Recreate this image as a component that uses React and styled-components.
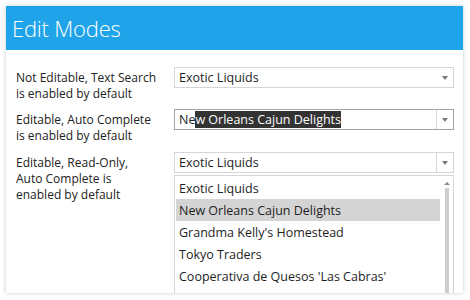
import React from "react";
import styled, { createGlobalStyle } from "styled-components";

const Global = createGlobalStyle`
  html, body { margin: 0; padding: 0; background: #ffffff; }
  body { font-family: "Open Sans", "Noto Sans", sans-serif; }
`;

const Page = styled.div`
  padding: 6px 7px 7px 6px;
`;

const Card = styled.div`
  width: 457px;
  height: 287px;
  background: #fff;
  box-shadow: 0 0 4px rgba(0, 0, 0, 0.22);
  overflow: hidden;
  display: flex;
  flex-direction: column;
`;

const Header = styled.div`
  flex-shrink: 0;
  height: 44px;
  background: #1fa3e9;
  color: #fff;
  display: flex;
  align-items: center;
  padding-left: 6px;
  font-family: "Open Sans", "Noto Sans", sans-serif;
  font-weight: 300;
  font-size: 22px;
  letter-spacing: -0.2px;
`;

const Body = styled.div`
  flex-shrink: 0;
  padding: 17px 0 0 10px;
  display: flex;
  flex-direction: column;
`;

const Row = styled.div`
  flex-shrink: 0;
  display: flex;
  align-items: flex-start;
  height: ${(p) => p.$h}px;
`;

const Label = styled.div`
  width: 158px;
  padding-top: 3px;
  font-size: 12px;
  line-height: 16px;
  color: #222;
  white-space: pre-line;
`;

const Field = styled.div`
  width: 280px;
  display: flex;
  flex-direction: column;
`;

const Select = styled.div`
  box-sizing: border-box;
  height: 21px;
  border: 1px solid ${(p) => (p.$focused ? "#a3a3a3" : "#d6d6d6")};
  display: flex;
  align-items: center;
  background: #fff;
`;

const Value = styled.div`
  flex: 1;
  padding-left: 4px;
  font-size: 12.5px;
  color: #1e1e1e;
  white-space: nowrap;
`;

const Sel = styled.span`
  background: #333;
  color: #fff;
  padding: 0;
`;

const Button = styled.div`
  width: 16px;
  align-self: stretch;
  display: flex;
  align-items: center;
  justify-content: center;
  border-left: 1px solid ${(p) => (p.$divider ? "#d6d6d6" : "transparent")};
`;

const Arrow = styled.div`
  width: 0;
  height: 0;
  border-left: 3.5px solid transparent;
  border-right: 3.5px solid transparent;
  border-top: 4px solid #7a7a7a;
`;

const List = styled.div`
  box-sizing: border-box;
  margin-top: 2px;
  border: 1px solid #d6d6d6;
  display: flex;
  padding: 1px 0 0 1px;
  height: 140px;
`;

const Items = styled.div`
  flex: 1;
  display: flex;
  flex-direction: column;
`;

const Item = styled.div`
  height: 22px;
  display: flex;
  align-items: center;
  padding-left: 3px;
  font-size: 12.5px;
  color: #1e1e1e;
  white-space: nowrap;
  background: ${(p) => (p.$active ? "#d4d4d4" : "transparent")};
`;

const Scroll = styled.div`
  width: 13px;
  display: flex;
  flex-direction: column;
  align-items: center;
  padding-top: 5px;
`;

const UpArrow = styled.div`
  width: 0;
  height: 0;
  border-left: 3px solid transparent;
  border-right: 3px solid transparent;
  border-bottom: 3px solid #8a8a8a;
  margin-left: 1px;
`;

const Thumb = styled.div`
  width: 4px;
  flex: 1;
  margin-top: 3px;
  background: #cdcdcd;
`;

const items = [
  "Exotic Liquids",
  "New Orleans Cajun Delights",
  "Grandma Kelly's Homestead",
  "Tokyo Traders",
  "Cooperativa de Quesos 'Las Cabras'",
];

export default function App() {
  return (
    <>
      <Global />
      <Page>
        <Card>
          <Header>Edit Modes</Header>
          <Body>
            <Row $h={42}>
              <Label>{"Not Editable, Text Search\nis enabled by default"}</Label>
              <Field>
                <Select>
                  <Value>Exotic Liquids</Value>
                  <Button>
                    <Arrow />
                  </Button>
                </Select>
              </Field>
            </Row>
            <Row $h={43}>
              <Label>{"Editable, Auto Complete\nis enabled by default"}</Label>
              <Field>
                <Select $focused>
                  <Value>
                    Ne<Sel>w Orleans Cajun Delights</Sel>
                  </Value>
                  <Button $divider>
                    <Arrow />
                  </Button>
                </Select>
              </Field>
            </Row>
            <Row $h={160}>
              <Label>{"Editable, Read-Only,\nAuto Complete is\nenabled by  default"}</Label>
              <Field>
                <Select>
                  <Value>Exotic Liquids</Value>
                  <Button $divider>
                    <Arrow />
                  </Button>
                </Select>
                <List>
                  <Items>
                    {items.map((t, i) => (
                      <Item key={t} $active={i === 1}>
                        {t}
                      </Item>
                    ))}
                  </Items>
                  <Scroll>
                    <UpArrow />
                    <Thumb />
                  </Scroll>
                </List>
              </Field>
            </Row>
          </Body>
        </Card>
      </Page>
    </>
  );
}
